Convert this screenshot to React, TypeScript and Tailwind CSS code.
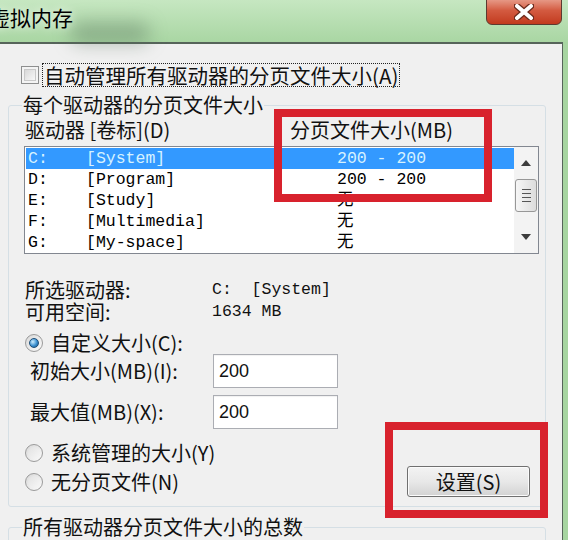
import React from 'react';

type Drive = { letter: string; label: string; size: string; selected?: boolean };

const drives: Drive[] = [
  { letter: 'C:', label: '[System]', size: '200 - 200', selected: true },
  { letter: 'D:', label: '[Program]', size: '200 - 200' },
  { letter: 'E:', label: '[Study]', size: '无' },
  { letter: 'F:', label: '[Multimedia]', size: '无' },
  { letter: 'G:', label: '[My-space]', size: '无' },
];

function Radio({ checked }: { checked?: boolean }) {
  return (
    <span className="flex h-[18px] w-[18px] shrink-0 items-center justify-center rounded-full border border-[#9a9a9a] bg-linear-to-br from-[#d9d9d9] to-[#fbfbfb]">
      {checked ? (
        <span className="h-[10px] w-[10px] rounded-full border border-[#1d4f7a] bg-[radial-gradient(circle_at_35%_35%,#cdeeff,#3a8fd0_55%,#17507f)]" />
      ) : (
        <span className="h-[12px] w-[12px] rounded-full bg-linear-to-br from-[#e2e2e2] to-[#f7f7f7]" />
      )}
    </span>
  );
}

function Arrow({ up }: { up?: boolean }) {
  return (
    <svg width="10" height="6" viewBox="0 0 10 6">
      <path d={up ? 'M0 6 L5 0 L10 6 Z' : 'M0 0 L10 0 L5 6 Z'} fill="#3c3c3c" />
    </svg>
  );
}

export default function App() {
  return (
    <div className="relative h-[540px] w-[568px] overflow-hidden bg-[#a7d5a1] font-['Noto_Sans_CJK_SC',sans-serif] text-[20px] leading-[22px] text-[#111]">
      {/* title bar */}
      <div className="relative flex h-[42px] items-start justify-between bg-linear-to-b from-[#c6e7c1] to-[#a9d6a3]">
        <div className="absolute left-[70px] top-[22px] h-[22px] w-[80px] rounded-full bg-[#55705a]/40 blur-[9px]" />
        <div className="relative ml-[-11px] mt-[6px] text-[21px] leading-[22px] text-black [text-shadow:0_0_8px_rgba(255,255,255,0.9)]">
          虚拟内存
        </div>
        <div className="mr-[6px] mt-[-4px] flex h-[29px] w-[76px] items-center justify-center rounded-b-[6px] border border-[#5c3a30] bg-linear-to-b from-[#eaa898] via-[#d35a40] to-[#c23a1d] pt-[2px]">
          <svg width="20" height="16" viewBox="0 0 20 16">
            <path d="M3 2 L17 14 M17 2 L3 14" stroke="#6b2a1c" strokeWidth="6.5" strokeLinecap="round" />
            <path d="M3 2 L17 14 M17 2 L3 14" stroke="#ffffff" strokeWidth="4" strokeLinecap="round" />
          </svg>
        </div>
      </div>

      {/* dialog body */}
      <div className="h-[498px] w-[563px] border-r border-t-2 border-[#56645a] bg-[#f0f0f0]">
        <div className="ml-[21px] mt-[20px] flex h-[22px] items-center">
          <span className="h-[18px] w-[18px] border border-[#8e8f8f] bg-[#f4f4f4] p-[2px]">
            <span className="block h-full w-full border border-[#c9c9c9] bg-linear-to-br from-[#d8d8d8] to-[#f8f8f8]" />
          </span>
          <span className="ml-[4px] px-[1px] text-[20.5px] outline-1 outline-dotted outline-[#222]">
            自动管理所有驱动器的分页文件大小(A)
          </span>
        </div>

        <fieldset className="ml-[8px] mr-[16px] mt-[8px] rounded-[3px] border border-[#d5dfe5] pb-[9px] pl-[15px] pr-[6px]">
          <legend className="-ml-[2px] px-[1px]">每个驱动器的分页文件大小</legend>

          <div className="mt-[3px] flex h-[22px] items-center pl-[1px]">
            <span className="w-[265px]">驱动器 [卷标](D)</span>
            <span>分页文件大小(MB)</span>
          </div>

          <div className="mt-[5px] flex h-[108px] border border-[#828790] bg-white font-['Liberation_Mono','Noto_Sans_CJK_SC',monospace] text-[16.5px]">
            <div className="flex-1 pl-[1px] pt-[1px]">
              {drives.map((d) => (
                <div
                  key={d.letter}
                  className={`flex h-[21px] items-center pl-[2px] ${d.selected ? 'bg-[#3399ff] text-[#d6f2ff]' : 'text-black'}`}
                >
                  <span className="w-[58px]">{d.letter}</span>
                  <span className="w-[251px]">{d.label}</span>
                  <span>{d.size}</span>
                </div>
              ))}
            </div>
            <div className="flex w-[24px] flex-col items-center bg-[#f3f3f3]">
              <div className="flex h-[32px] items-center justify-center">
                <Arrow up />
              </div>
              <div className="flex h-[33px] w-[22px] flex-col items-center justify-center gap-[3px] rounded-[3px] border border-[#979797] bg-linear-to-r from-[#f6f6f6] to-[#dcdcdc]">
                <span className="h-[1px] w-[9px] bg-[#555]" />
                <span className="h-[1px] w-[9px] bg-[#555]" />
                <span className="h-[1px] w-[9px] bg-[#555]" />
                <span className="h-[1px] w-[9px] bg-[#555]" />
              </div>
              <div className="flex-1" />
              <div className="flex h-[32px] items-center justify-center">
                <Arrow />
              </div>
            </div>
          </div>

          <div className="flex items-end">
            <div className="pb-[4px]">
              <div className="mt-[25px] grid grid-cols-[187px_1fr] pl-[1px]">
                <span className="h-[22px]">所选驱动器:</span>
                <span className="whitespace-pre font-['Liberation_Mono',monospace] text-[16.5px] leading-[22px]">C:  [System]</span>
                <span className="h-[22px]">可用空间:</span>
                <span className="whitespace-pre font-['Liberation_Mono',monospace] text-[16.5px] leading-[22px]">1634 MB</span>
              </div>

              <div className="mt-[9px] flex h-[22px] items-center gap-[8px] pl-[1px]">
                <Radio checked />
                <span>自定义大小(C):</span>
              </div>

              <div className="flex h-[34px] items-center pl-[6px]">
                <span className="w-[183px]">初始大小(MB)(I):</span>
                <div className="flex h-[34px] w-[125px] items-center border border-[#abadb3] bg-white pl-[5px] font-['Liberation_Sans',sans-serif] text-[18px] shadow-[inset_0_1px_1px_rgba(0,0,0,0.06)]">
                  200
                </div>
              </div>

              <div className="mt-[7px] flex h-[34px] items-center pl-[6px]">
                <span className="w-[183px]">最大值(MB)(X):</span>
                <div className="flex h-[34px] w-[125px] items-center border border-[#abadb3] bg-white pl-[5px] font-['Liberation_Sans',sans-serif] text-[18px] shadow-[inset_0_1px_1px_rgba(0,0,0,0.06)]">
                  200
                </div>
              </div>

              <div className="mt-[13px] flex h-[22px] items-center gap-[8px] pl-[1px]">
                <Radio />
                <span>系统管理的大小(Y)</span>
              </div>
              <div className="mt-[7px] flex h-[22px] items-center gap-[8px] pl-[1px]">
                <Radio />
                <span>无分页文件(N)</span>
              </div>
            </div>

            <button className="ml-auto mr-[9px] flex h-[31px] w-[123px] items-center justify-center rounded-[3px] border border-[#707070] bg-linear-to-b from-[#f3f3f3] via-[#e8e8e8] to-[#d2d2d2] shadow-[inset_0_0_0_1px_#fbfbfb]">
              设置(S)
            </button>
          </div>
        </fieldset>

        <fieldset className="ml-[8px] mr-[16px] mt-[9px] h-[60px] rounded-[3px] border border-[#d5dfe5] pl-[15px]">
          <legend className="-ml-[2px] px-[1px]">所有驱动器分页文件大小的总数</legend>
        </fieldset>
      </div>

      {/* red annotation boxes */}
      <div className="absolute left-[274px] top-[109px] h-[93px] w-[218px] border-[8px] border-[#d8222d]" />
      <div className="absolute left-[385px] top-[422px] h-[96px] w-[163px] border-[8px] border-[#d8222d]" />
    </div>
  );
}
